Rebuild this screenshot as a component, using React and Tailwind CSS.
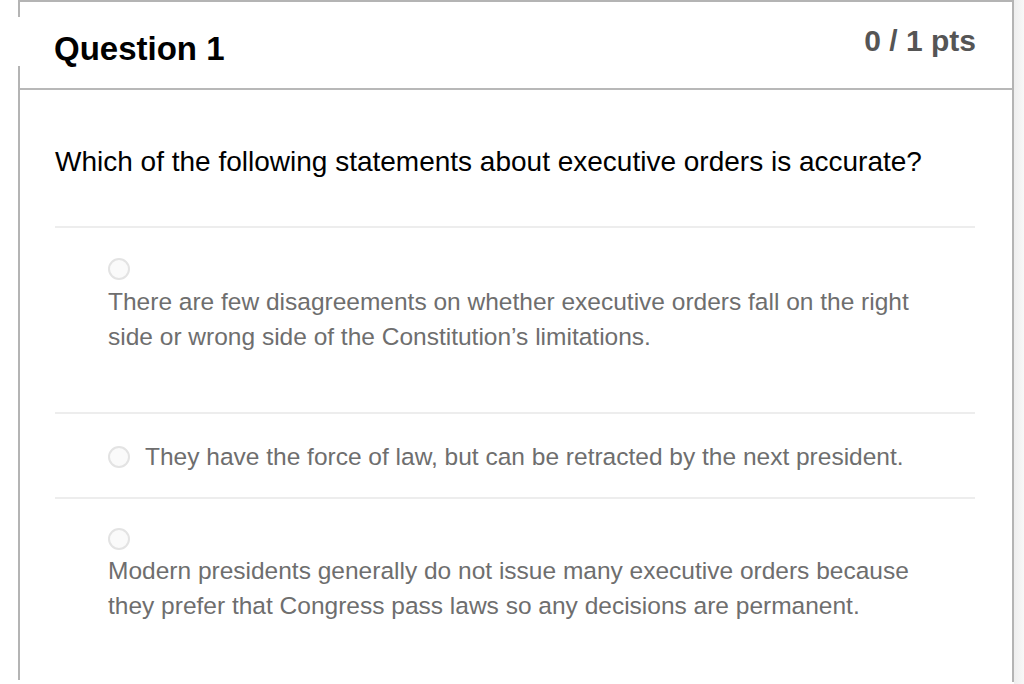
import React from "react";

function Radio() {
  return (
    <span className="block w-[22px] h-[22px] rounded-full border-2 border-[#e3e3e3] bg-[#fafafa] shrink-0" />
  );
}

export default function App() {
  return (
    <div
      className="w-[1024px] h-[684px] overflow-hidden bg-white flex"
      style={{ fontFamily: '"Liberation Sans", Arial, Helvetica, sans-serif' }}
    >
      <div className="w-[18px] shrink-0" />
      {/* left rail */}
      <div className="w-[2px] shrink-0 flex flex-col">
        <div className="h-[17px] bg-[#b4b4b4]" />
        <div className="h-[49px]" />
        <div className="h-[614px] bg-[#b4b4b4]" />
      </div>
      {/* card */}
      <div className="w-[994px] h-[682px] shrink-0 border-t-2 border-r-2 border-[#b4b4b4] flex flex-col overflow-hidden">
        <div className="h-[88px] border-b-2 border-[#b8b8b8] flex justify-between items-start pl-[34px] pr-[36px] shrink-0">
          <h2 className="pt-[30px] text-[33px] leading-none font-bold text-black">Question 1</h2>
          <div className="pt-[24px] text-[30px] leading-none font-bold text-[#555555]">0 / 1 pts</div>
        </div>
        <div className="pl-[35px] pr-[37px] flex flex-col">
          <p className="pt-[58px] text-[28px] leading-none text-black">
            Which of the following statements about executive orders is accurate?
          </p>
          <div className="mt-[50px] h-[2px] bg-[#ededed]" />
          {/* option 1 */}
          <div className="pl-[53px] pr-[25px] pb-[58px]">
            <div className="pt-[30px]">
              <Radio />
            </div>
            <p className="mt-[4px] text-[24.5px] leading-[35px] text-[#6e6e6e]">
              There are few disagreements on whether executive orders fall on the right side or wrong side of the Constitution’s limitations.
            </p>
          </div>
          <div className="h-[2px] bg-[#ededed]" />
          {/* option 2 */}
          <div className="pl-[53px] pr-[25px] pt-[25px] pb-[23px]">
            <div className="h-[35px] flex items-center">
              <Radio />
              <span className="ml-[15px] text-[24.5px] leading-[35px] text-[#6e6e6e]">
                They have the force of law, but can be retracted by the next president.
              </span>
            </div>
          </div>
          <div className="h-[2px] bg-[#ededed]" />
          {/* option 3 */}
          <div className="pl-[53px] pr-[25px] pb-[57px]">
            <div className="pt-[29px]">
              <Radio />
            </div>
            <p className="mt-[3px] text-[24.5px] leading-[35px] text-[#6e6e6e]">
              Modern presidents generally do not issue many executive orders because they prefer that Congress pass laws so any decisions are permanent.
            </p>
          </div>
        </div>
      </div>
      {/* right shade */}
      <div className="flex-1 h-[684px] bg-gradient-to-r from-[#eeeeee] to-[#f8f8f8]" />
    </div>
  );
}
